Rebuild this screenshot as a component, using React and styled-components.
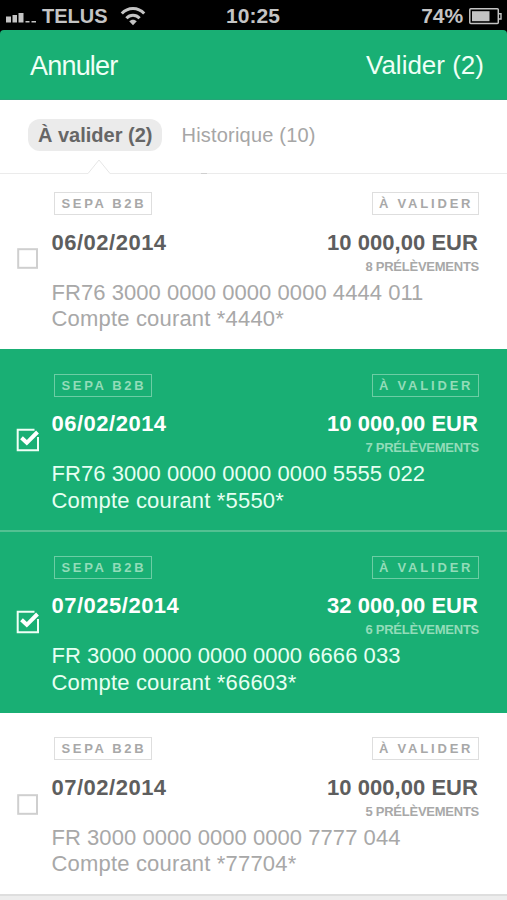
import React from 'react'
import styled, { createGlobalStyle } from 'styled-components'

const GlobalStyle = createGlobalStyle`
    * {
        box-sizing: border-box;
    }
    body {
        margin: 0;
        background: #fff;
        font-family: "Liberation Sans", Arial, Helvetica, sans-serif;
    }
`

const Screen = styled.div`
    width: 507px;
    height: 900px;
    overflow: hidden;
    background: #000;
`

const StatusBar = styled.div`
    display: grid;
    grid-template-columns: 1fr auto 1fr;
    align-items: center;
    height: 30px;
    padding: 2px 5px 0 6px;
    color: #c4c4c4;
    font-size: 21px;
    font-weight: bold;
    line-height: 28px;
`

const StatusSide = styled.div`
    display: flex;
    align-items: center;
    justify-content: ${p => p.$end ? 'flex-end' : 'flex-start'};
    svg {
        display: block;
    }
`

const Carrier = styled.span`
    margin: 0 12px 0 5px;
    font-size: 20px;
`

const Clock = styled.span`
    margin-right: 2px;
    letter-spacing: 0.1px;
`

const Percent = styled.span`
    margin-right: 6px;
    letter-spacing: -0.1px;
    font-weight: bold;
`

const NavBar = styled.header`
    display: flex;
    justify-content: space-between;
    height: 70px;
    padding: 19px 23px 0 30px;
    border-bottom: 1px solid #25a577;
    border-radius: 4px 4px 0 0;
    background: #19af74;
`

const NavButton = styled.button`
    padding: 0;
    border: 0;
    background: none;
    color: #effff6;
    font-family: inherit;
    font-size: ${p => p.$main ? 26 : 27}px;
    line-height: ${p => p.$main ? 32 : 34}px;
    height: 34px;
    align-self: flex-start;
    display: flex;
    letter-spacing: ${p => p.$main ? 0 : -0.8}px;
`

const Tabs = styled.nav`
    display: flex;
    align-items: flex-start;
    position: relative;
    height: 74px;
    padding: 19px 0 0 28px;
    border-bottom: 1px solid #ebebeb;
    background: #fff;
`

const Tab = styled.div`
    height: 32px;
    padding: 0 10px;
    border-radius: 12px;
    background: ${p => p.$active ? '#ebebeb' : 'none'};
    color: ${p => p.$active ? '#666' : '#a6a6a6'};
    font-size: 20px;
    font-weight: ${p => p.$active ? 'bold' : 'normal'};
    line-height: 32px;
    letter-spacing: ${p => p.$active ? 0 : 0.2}px;
    & + & {
        margin-left: 9px;
    }
`

// sits over the border of the tab bar
const Pointer = styled.svg`
    position: absolute;
    left: 87px;
    bottom: -1px;
`

const Nub = styled.i`
    position: absolute;
    left: 201px;
    bottom: -1px;
    width: 6px;
    height: 1px;
    background: #cfcfcf;
`

const List = styled.main`
    background: #fff;
`

const Row = styled.section`
    display: flex;
    height: ${p => p.$first ? 175.2 : 181.75}px;
    padding: ${p => p.$first ? 18.2 : 24.7}px 28px 0 16px;
    box-shadow: ${p => p.$line ? 'inset 0 1px 0 #53c192' : 'none'};
    border-bottom: ${p => p.$lineBelow ? '1px solid #53c192' : '0'};
    background: ${p => p.$checked ? '#19af74' : '#fff'};
    color: ${p => p.$checked ? '#e6fff2' : '#a8a8a8'};
`

const Check = styled.div`
    width: 36px;
    padding-top: ${p => p.$checked ? 54 : 55.2}px;
    flex: none;
    svg {
        display: block;
    }
`

const Body = styled.div`
    flex: 1;
    min-width: 0;
`

const Line = styled.div`
    display: flex;
    justify-content: space-between;
`

const Badge = styled.span`
    height: 23px;
    margin-left: ${p => p.$left ? 2 : 0}px;
    width: ${p => p.$left ? 98 : 107}px;
    padding-left: ${p => p.$left ? 6.5 : 6}px;
    border: 1px solid ${p => p.$checked ? '#6ccda4' : '#dedede'};
    color: ${p => p.$checked ? '#93dcb9' : '#a8a8a8'};
    font-size: 13px;
    font-weight: bold;
    line-height: ${p => p.$left ? 21 : 22}px;
    letter-spacing: ${p => p.$left ? 2.65 : 2.8}px;
    white-space: nowrap;
`

const Main = styled(Line)`
    margin-top: 13.5px;
    color: ${p => p.$checked ? '#fff' : '#5e5e5e'};
    font-size: 22px;
    font-weight: bold;
    line-height: 27px;
`

const When = styled.span`
    margin-left: -0.5px;
    letter-spacing: 0.5px;
`

const Amount = styled.span`
    margin-right: 1px;
    letter-spacing: 0.05px;
`

const Count = styled.div`
    margin-top: 3px;
    color: ${p => p.$checked ? '#93dcb9' : '#a8a8a8'};
    font-size: 13px;
    font-weight: bold;
    line-height: 16px;
    letter-spacing: -0.25px;
    text-align: right;
`

const Account = styled.div`
    margin-top: 5px;
    margin-left: -0.5px;
    font-size: 22px;
    line-height: 26.6px;
    white-space: nowrap;
`

const Iban = styled.div`
    letter-spacing: 0.05px;
`

const AccountName = styled.div`
    letter-spacing: 0.18px;
`

const Footer = styled.footer`
    height: 20px;
    border-top: 2px solid #dedede;
    background: #ededed;
`

const orders = [
    { date: '06/02/2014', amount: '10 000,00 EUR', count: 8, iban: 'FR76 3000 0000 0000 0000 4444 011', account: '*4440*', checked: false },
    { date: '06/02/2014', amount: '10 000,00 EUR', count: 7, iban: 'FR76 3000 0000 0000 0000 5555 022', account: '*5550*', checked: true },
    { date: '07/025/2014', amount: '32 000,00 EUR', count: 6, iban: 'FR 3000 0000 0000 0000 6666 033', account: '*66603*', checked: true },
    { date: '07/02/2014', amount: '10 000,00 EUR', count: 5, iban: 'FR 3000 0000 0000 0000 7777 044', account: '*77704*', checked: false },
]

const Signal = () => (
    <svg width="31" height="14" viewBox="0 0 31 14" fill="#c4c4c4">
        <rect x="0" y="7.5" width="5" height="6" />
        <rect x="6.5" y="6" width="4.5" height="7.5" />
        <rect x="12.5" y="4" width="5" height="9.5" />
        <rect x="19.5" y="12" width="4" height="1.5" />
        <rect x="25.5" y="12" width="4.5" height="1.5" />
    </svg>
)

const Wifi = () => (
    <svg width="26" height="20" viewBox="0 0 26 20" fill="none" stroke="#c4c4c4" strokeWidth="3">
        <path d="M1.8 7.6C8 0.9 18 0.9 24.2 7.6" />
        <path d="M6.4 12.2C10 8.2 16 8.2 19.6 12.2" />
        <path d="M13 19.2L9.2 15.3C11.2 13.2 14.8 13.2 16.8 15.3Z" fill="#c4c4c4" stroke="none" />
    </svg>
)

const Battery = () => (
    <svg width="33" height="17" viewBox="0 0 33 17">
        <rect x="0.8" y="0.8" width="28.5" height="14.7" rx="1" fill="none" stroke="#c4c4c4" strokeWidth="1.5" />
        <rect x="3" y="3.2" width="17.5" height="10" fill="#c4c4c4" />
        <path d="M29.5 5.8H32V11H29.5" fill="none" stroke="#c4c4c4" strokeWidth="1.4" />
    </svg>
)

const Box = ({ checked }) => (
    <svg width="24" height="24" viewBox="0 0 24 24" fill="none">
        {checked ? (
            <>
                <path d="M18.5 1.8H1.7V22.2H22V9" stroke="#effff6" strokeWidth="2" />
                <path d="M5.5 9.8L10.8 14.8L21.5 4" stroke="#fff" strokeWidth="4" />
            </>
        ) : (
            <rect x="2.2" y="2.2" width="18.8" height="18.6" stroke="#cfcfcf" strokeWidth="2" />
        )}
    </svg>
)

const Order = ({ order, first, line, lineBelow }) => (
    <Row $first={first} $checked={order.checked} $line={line} $lineBelow={lineBelow}>
        <Check $checked={order.checked}>
            <Box checked={order.checked} />
        </Check>
        <Body>
            <Line>
                <Badge $left $checked={order.checked}>SEPA B2B</Badge>
                <Badge $checked={order.checked}>À VALIDER</Badge>
            </Line>
            <Main $checked={order.checked}>
                <When>{order.date}</When>
                <Amount>{order.amount}</Amount>
            </Main>
            <Count $checked={order.checked}>{order.count} PRÉLÈVEMENTS</Count>
            <Account>
                <Iban>{order.iban}</Iban>
                <AccountName>Compte courant {order.account}</AccountName>
            </Account>
        </Body>
    </Row>
)

const App = () => {
    return (
        <Screen>
            <GlobalStyle />
            <StatusBar>
                <StatusSide>
                    <Signal />
                    <Carrier>TELUS</Carrier>
                    <Wifi />
                </StatusSide>
                <Clock>10:25</Clock>
                <StatusSide $end>
                    <Percent>74%</Percent>
                    <Battery />
                </StatusSide>
            </StatusBar>
            <NavBar>
                <NavButton>Annuler</NavButton>
                <NavButton $main>Valider (2)</NavButton>
            </NavBar>
            <Tabs>
                <Tab $active>À valider (2)</Tab>
                <Tab>Historique (10)</Tab>
                <Pointer width="24" height="15" viewBox="0 0 24 15">
                    <path d="M1 14.5L12 1L23 14.5V15H1Z" fill="#fff" />
                    <path d="M1 14.5L12 1L23 14.5" fill="none" stroke="#e6e6e6" />
                </Pointer>
                <Nub />
            </Tabs>
            <List>
                {orders.map((order, i) => (
                    <Order
                        key={i}
                        order={order}
                        first={i === 0}
                        line={order.checked && orders[i - 1]?.checked}
                        lineBelow={order.checked && orders[i + 1]?.checked}
                    />
                ))}
            </List>
            <Footer />
        </Screen>
    )
}

export default App
